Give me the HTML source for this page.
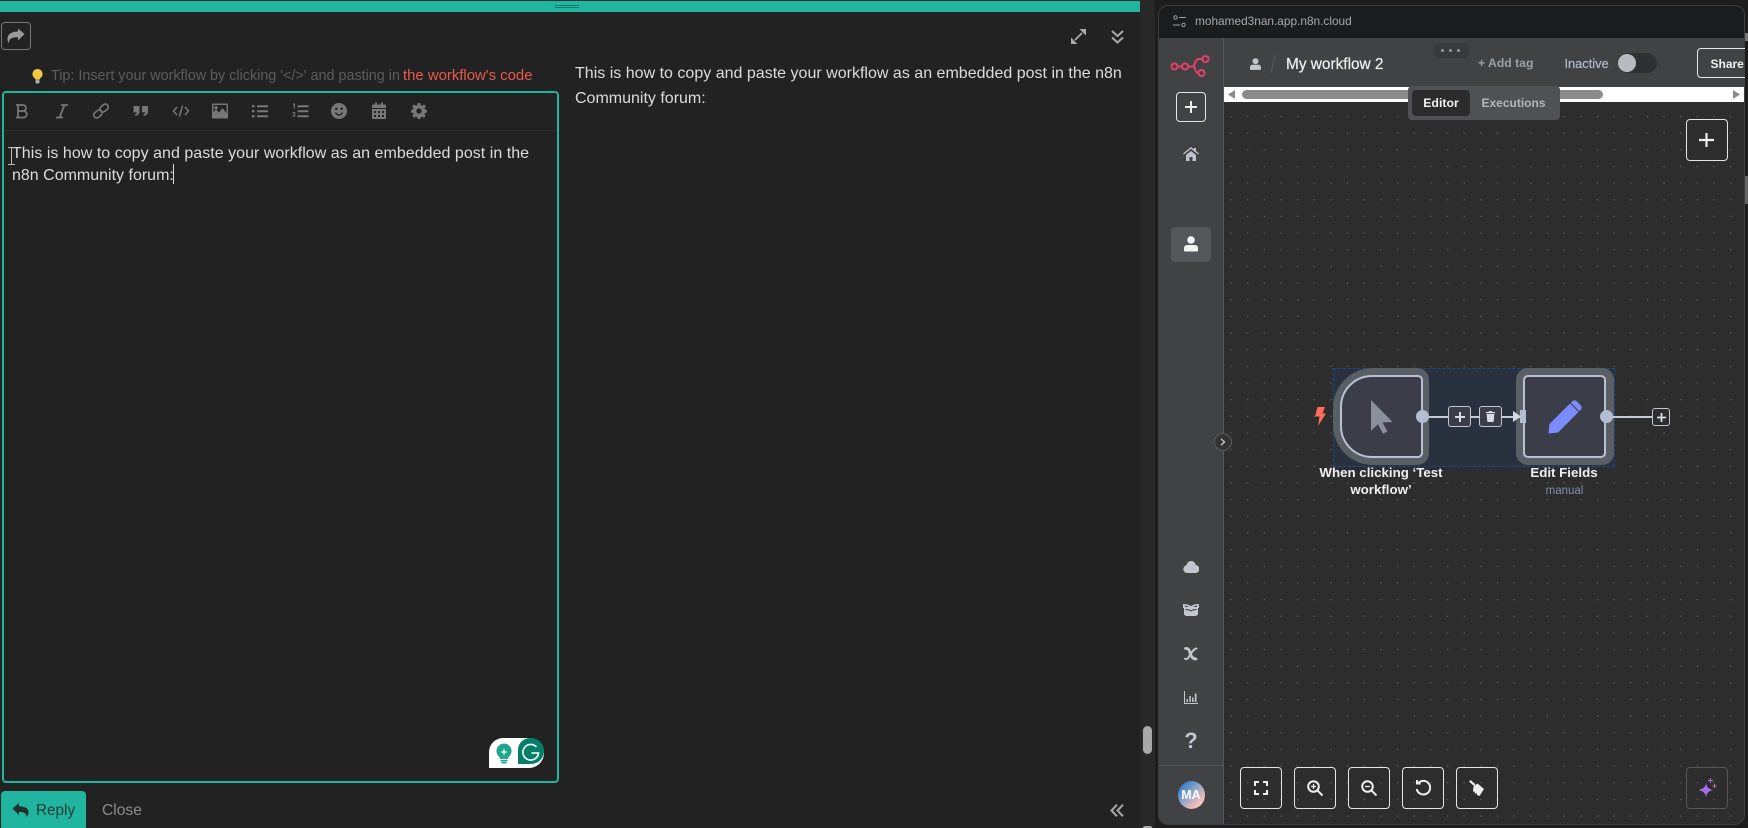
<!DOCTYPE html>
<html><head><meta charset="utf-8">
<style>
html,body{margin:0;padding:0;background:#222;width:1748px;height:828px;overflow:hidden}
body{position:relative;font-family:"Liberation Sans",sans-serif}
.a,.t,svg{position:absolute;display:block}
.a{box-sizing:border-box}
.t{white-space:nowrap;line-height:20px}
.c{text-align:center}
.btn{box-sizing:border-box;position:absolute;border:1px solid #e4e6ea;border-radius:4px;background:#2d2d2d}
</style></head><body>
<!-- top -->
<div class="a" style="left:0;top:0;width:1140px;height:1px;background:#26302e"></div>
<div class="a" style="left:0;top:1px;width:1140px;height:11px;background:#1fb59f"></div>
<div class="a" style="left:555px;top:5px;width:24px;height:1px;background:#13796a"></div>
<div class="a" style="left:555px;top:7px;width:24px;height:1px;background:#13796a"></div>

<div class="a" style="left:1px;top:22px;width:30px;height:28px;border:1px solid #777;border-radius:4px"></div>
<svg style="left:7px;top:28px" width="18" height="16" viewBox="0 0 18 16"><path fill="#9a9a9a" d="M17.500 6L11 .5v3C5 3.600 .5 5.500.5 11.500c0 1.500.7 2.800 1.700 3.800-.6-3.800 1.500-6 8.800-6v3.200z"/></svg>

<svg style="left:1071px;top:29px" width="15" height="15" viewBox="0 0 15 15"><path fill="#aaa" d="M8.500 0H15v6.500zM0 8.500V15h6.500z"/><path stroke="#aaa" stroke-width="1.800" d="M11 4L4 11"/></svg>
<svg style="left:1111px;top:30px" width="13" height="14" viewBox="0 0 13 14"><path fill="none" stroke="#aaa" stroke-width="2" d="M1 1l5.500 5L12 1M1 7.500l5.500 5 5.500-5"/></svg>

<svg style="left:31px;top:69px" width="13" height="15" viewBox="0 0 13 15"><path fill="#f5c842" d="M6.500 0a5 5 0 0 1 3 9c-.6.500-.8 1-.9 1.800H4.400c-.1-.8-.3-1.300-.9-1.800a5 5 0 0 1 3-9z"/><rect x="4.500" y="11" width="4" height="3.500" rx="1" fill="#9fb2c4"/></svg>
<div class="t" style="left:51px;top:66px;font-size:14.360px;color:#5c5c5c">Tip: Insert your workflow by clicking '&lt;/&gt;' and pasting in</div>
<div class="t" style="left:403px;top:66px;font-size:14.900px;color:#ea5a4c">the workflow's code</div>

<div class="t" style="left:575px;top:63.500px;font-size:16px;color:#dcdcdc;letter-spacing:.01px">This is how to copy and paste your workflow as an embedded post in the n8n</div>
<div class="t" style="left:575px;top:88.500px;font-size:16px;color:#dcdcdc">Community forum:</div>

<!-- editor -->
<div class="a" style="left:1.500px;top:91px;width:557.500px;height:692px;border:2px solid #1fb59f;border-radius:4px"></div>
<div class="a" style="left:4px;top:130px;width:553px;height:1px;background:#2e2e2e"></div>

<svg style="left:13px;top:102px" width="18" height="18" viewBox="0 0 18 18"><path fill="none" stroke="#777" stroke-width="1.800" d="M5 3h5a3 3 0 0 1 0 6H5zM5 9h6a3.300 3.300 0 0 1 0 6.500H5zM3 3h3M3 15.500h3"/></svg>
<svg style="left:53px;top:102px" width="18" height="18" viewBox="0 0 18 18"><path fill="none" stroke="#777" stroke-width="1.800" d="M8 3h7M3 15.500h7M11.500 3L6.500 15.500"/></svg>
<svg style="left:92px;top:102px" width="18" height="18" viewBox="0 0 18 18"><g fill="none" stroke="#777" stroke-width="1.600"><rect x="-6" y="-3" width="9" height="6" rx="3" transform="translate(7 11) rotate(-40)"/><rect x="-3" y="-3" width="9" height="6" rx="3" transform="translate(11 7) rotate(-40)"/></g></svg>
<svg style="left:132px;top:102px" width="18" height="18" viewBox="0 0 18 18"><path fill="#777" d="M1.500 4h6v5.500c0 2.500-1.500 4-4 4.500l-.7-1.600c1.300-.3 2-1 2-2H1.500zM10 4h6v5.500c0 2.500-1.500 4-4 4.500l-.7-1.600c1.300-.3 2-1 2-2H10z"/></svg>
<svg style="left:172px;top:102px" width="18" height="18" viewBox="0 0 18 18"><path fill="none" stroke="#777" stroke-width="1.500" d="M5 5L1.500 9 5 13M13 5l3.500 4L13 13M10.500 3.500l-3 11"/></svg>
<svg style="left:212px;top:102px" width="16" height="18" viewBox="0 0 16 18"><path fill="#777" fill-rule="evenodd" d="M1 1.500h14a1 1 0 0 1 1 1v13a1 1 0 0 1-1 1H1a1 1 0 0 1-1-1v-13a1 1 0 0 1 1-1zM1.500 3v7l2.500-2.500 3 3 3.500-4.500 4 5V3zM4 4a1.700 1.700 0 1 1 0 3.400A1.700 1.700 0 0 1 4 4z"/></svg>
<svg style="left:252px;top:102px" width="17" height="18" viewBox="0 0 17 18"><path fill="#777" d="M0 3h2.400v2.400H0zM0 8h2.400v2.400H0zM0 13h2.400v2.400H0zM5 3.300h11v2H5zM5 8.300h11v2H5zM5 13.300h11v2H5z"/></svg>
<svg style="left:292px;top:102px" width="17" height="18" viewBox="0 0 17 18"><path fill="#777" d="M5.500 3.300h11v2h-11zM5.500 8.300h11v2h-11zM5.500 13.300h11v2h-11zM1 1.500h2v5H1.800V3H1zM.5 10.500c1-1 3-.6 3 .8 0 1-1 1.400-1.500 2.200h1.600v1H.5v-.8c.7-1 1.800-1.600 1.800-2.300 0-.5-.9-.5-1.500 0z"/></svg>
<svg style="left:331px;top:103px" width="16" height="16" viewBox="0 0 16 16"><path fill="#777" fill-rule="evenodd" d="M8 0a8 8 0 1 1 0 16A8 8 0 0 1 8 0zM5.300 4.500a1.200 1.200 0 1 0 0 2.500 1.200 1.200 0 0 0 0-2.500zm5.400 0a1.200 1.200 0 1 0 0 2.500 1.200 1.200 0 0 0 0-2.500zM4 9.500c.7 2 2.300 3 4 3s3.300-1 4-3l-1-.4c-.6 1.400-1.800 2.200-3 2.200s-2.400-.8-3-2.200z"/></svg>
<svg style="left:372px;top:102px" width="14" height="18" viewBox="0 0 14 18"><path fill="#777" fill-rule="evenodd" d="M3 .5h2v2h4v-2h2v2h2a1 1 0 0 1 1 1V6H0V3.500a1 1 0 0 1 1-1h2zM0 7h14v9a1 1 0 0 1-1 1H1a1 1 0 0 1-1-1zm2 2v2h2V9zm4 0v2h2V9zm4 0v2h2V9zm-8 4v2h2v-2zm4 0v2h2v-2zm4 0v2h2v-2z"/></svg>
<svg style="left:411px;top:103px" width="16" height="16" viewBox="0 0 16 16"><path fill="#777" fill-rule="evenodd" d="M6.700 0h2.600l.4 2.200 1.300.6L13 1.500 14.800 3.300 13.500 5.200l.6 1.300 1.900.4v2.600l-2 .4-.5 1.300 1.200 1.800-1.800 1.800-1.800-1.200-1.400.5-.4 2H6.700l-.4-2-1.400-.5-1.800 1.200L1.300 13l1.200-1.800-.5-1.300-2-.4V6.900l2-.4.5-1.300L1.200 3.300 3 1.500l1.900 1.300 1.400-.6zM8 5.300a2.700 2.700 0 1 0 0 5.400 2.700 2.700 0 0 0 0-5.400z"/></svg>

<div class="t" style="left:12px;top:143.500px;font-size:16px;color:#dcdcdc;letter-spacing:.03px">This is how to copy and paste your workflow as an embedded post in the</div>
<div class="t" style="left:12px;top:165.500px;font-size:16px;color:#dcdcdc">n8n Community forum:</div>
<div class="a" style="left:173px;top:164px;width:1px;height:20px;background:#ddd"></div>
<svg style="left:8px;top:147px" width="7" height="18" viewBox="0 0 7 18"><path fill="none" stroke="#bbb" d="M0 .5h7M3.500.5v17M0 17.500h7"/></svg>

<!-- grammarly -->
<div class="a" style="left:489px;top:738px;width:55px;height:30px;background:#fff;border-radius:14px 15px 15px 0"></div>
<svg style="left:495px;top:743px" width="18" height="21" viewBox="0 0 18 21"><path fill="#1fa58f" d="M9 .5a7.500 7.500 0 0 1 4.500 13.500l-.5 2H5l-.5-2A7.500 7.500 0 0 1 9 .5z"/><rect x="5.500" y="17" width="7" height="1.500" fill="#1fa58f"/><rect x="6.500" y="19" width="5" height="1.500" fill="#1fa58f"/><path fill="#cdf3ea" d="M9 5l1 3 3 1-3 1-1 3-1-3-3-1 3-1z"/></svg>
<div class="a" style="left:518px;top:738px;width:26px;height:26px;background:#04806a;border-radius:12px 13px 13px 0"></div>
<svg style="left:520px;top:742px" width="21" height="21" viewBox="0 0 21 21"><path fill="none" stroke="#fff" stroke-width="1.600" d="M16.500 5a7.800 7.800 0 1 0 2 6h-7"/></svg>

<!-- reply -->
<div class="a" style="left:1px;top:791px;width:85px;height:40px;background:#1fb59f;border-radius:4px"></div>
<svg style="left:12px;top:803px" width="17" height="15" viewBox="0 0 17 15"><path fill="#1f302d" d="M.5 5.500L7 0v3.200c5 .1 9.500 1.300 9.500 6.300 0 2-1.200 3.700-2.500 4.700.8-3.300-1-5.200-7-5.300V12z"/></svg>
<div class="t" style="left:36px;top:801px;font-size:15.300px;color:#1d3a35">Reply</div>
<div class="t" style="left:102px;top:801px;font-size:15.600px;color:#8c8c8c">Close</div>
<svg style="left:1110px;top:804px" width="14" height="13" viewBox="0 0 14 13"><path fill="none" stroke="#a8a8a8" stroke-width="2" d="M7 .7L1.500 6.500 7 12.300M13 .7L7.500 6.500l5.500 5.800"/></svg>

<!-- strip -->
<div class="a" style="left:1140px;top:0;width:15px;height:828px;background:#282828"></div>
<div class="a" style="left:1143px;top:726px;width:9px;height:28px;background:#a8a8a8;border-radius:4.500px"></div>
<div class="a" style="left:1143px;top:826px;width:9px;height:4px;background:#a8a8a8;border-radius:2px"></div>
<div class="a" style="left:1155px;top:0;width:593px;height:828px;background:#1d1d1e"></div>

<!-- n8n panel -->
<div class="a" style="left:1158px;top:5px;width:587px;height:820px;background:#2d2d2d;border:1px solid #3c3d3f;border-radius:10px;overflow:hidden">
  <div class="a" style="left:-1px;top:-1px;width:587px;height:33px;background:#1b1c1e"></div>
</div>
<!-- canvas dots -->
<div class="a" style="left:1224px;top:102px;width:520px;height:722px;background-image:radial-gradient(circle at 1px 1px,#5f5f5f .6px,transparent .9px);background-size:16.667px 16.667px;background-position:6px 13.500px"></div>

<svg style="left:1173px;top:15px" width="13" height="13" viewBox="0 0 13 13"><g fill="none" stroke="#9a9ea5"><circle cx="2.500" cy="2.500" r="1.700"/><path d="M6 2.500h7M0 10h7"/><circle cx="10.500" cy="10" r="1.700"/></g></svg>
<div class="t" style="left:1195px;top:10.500px;font-size:11.850px;color:#a4a9b0">mohamed3nan.app.n8n.cloud</div>

<!-- sidebar -->
<div class="a" style="left:1159px;top:38px;width:65px;height:786px;background:#414244;border-right:1px solid #55565a;border-radius:0 0 0 9px"></div>
<div class="a" style="left:1159px;top:765px;width:64px;height:1px;background:#55565a"></div>
<!-- header -->
<div class="a" style="left:1224px;top:38px;width:520px;height:49px;background:#414244"></div>
<!-- white scroll -->
<div class="a" style="left:1224px;top:87px;width:520px;height:15px;background:#fff"></div>
<div class="a" style="left:1242px;top:90px;width:361px;height:9px;background:#8b8b8b;border-radius:4.500px"></div>
<svg style="left:1228px;top:90px" width="8" height="9" viewBox="0 0 8 9"><path fill="#8b8b8b" d="M7 0v9L0 4.500z"/></svg>
<svg style="left:1733px;top:90px" width="8" height="9" viewBox="0 0 8 9"><path fill="#8b8b8b" d="M0 0v9l7-4.500z"/></svg>

<!-- logo -->
<svg style="left:1170px;top:55px" width="40" height="22" viewBox="0 0 40 22"><g fill="none" stroke="#e8406a" stroke-width="2"><circle cx="4.500" cy="11.500" r="3"/><circle cx="15" cy="11.500" r="3"/><circle cx="35.500" cy="4" r="3"/><circle cx="31.500" cy="18" r="3"/><path d="M7.500 11.500H12M18 11.500h4c2 0 2.500-1.500 3-3.500s1.500-4 4-4h3.500M22 11.500c2.500 0 2.800 1.500 3.200 3.200.4 1.800 1.300 3.300 3.300 3.300"/></g></svg>
<div class="a" style="left:1176px;top:92px;width:30px;height:30px;border:1px solid #e4e6ea;border-radius:4px"></div>
<svg style="left:1184px;top:100px" width="14" height="14" viewBox="0 0 14 14"><path fill="#eee" d="M6 1h2v5h5v2H8v5H6V8H1V6h5z"/></svg>
<svg style="left:1183px;top:147px" width="16" height="14" viewBox="0 0 16 14"><path fill="#bfc3cc" d="M8 0l3 2.400V1h2v3l3 2.500-.8 1L8 1.800.8 7.500 0 6.500zM3 8l5-4 5 4v6H9.500v-4h-3v4H3z"/></svg>
<div class="a" style="left:1171px;top:227px;width:40px;height:35px;background:#55565a;border-radius:4px"></div>
<svg style="left:1184px;top:236px" width="14" height="16" viewBox="0 0 14 16"><circle cx="7" cy="4" r="3.800" fill="#f2f2f2"/><path fill="#f2f2f2" d="M3 9h8a3 3 0 0 1 3 3v2.500a1 1 0 0 1-1 1H1a1 1 0 0 1-1-1V12a3 3 0 0 1 3-3z"/></svg>
<svg style="left:1183px;top:561px" width="16" height="12" viewBox="0 0 16 12"><path fill="#c2c6ce" d="M4 12a4 4 0 0 1-.5-7.900C4 1.700 6 0 8 0c2.500 0 4.300 1.700 4.700 4A4 4 0 0 1 12 12z"/></svg>
<svg style="left:1183px;top:603px" width="16" height="13" viewBox="0 0 16 13"><path fill="#c2c6ce" fill-rule="evenodd" d="M0 1l4 .2L8 3l4-1.800L16 1v4h-1v6.500l-2 1.500H3l-2-1.500V5H0zM2 2.500V4h4.300zm12 0L9.700 4H14zM2.500 6v1c2 0 3.500.4 5.500 1.500 2-1.100 3.500-1.500 5.500-1.500V6c-2 0-4 .4-5.500 1.300C6.500 6.400 4.500 6 2.500 6z"/></svg>
<svg style="left:1183px;top:646px" width="16" height="16" viewBox="0 0 16 16"><path fill="none" stroke="#c2c6ce" stroke-width="2.800" stroke-linecap="round" d="M2.500 2.500c2.500-.4 3.500.6 4.300 3.600S9 13 13 13"/><path fill="none" stroke="#c2c6ce" stroke-width="2" stroke-linecap="round" d="M13.500 2.500c-3 .2-6 5.500-8 9-.8 1.300-2.200 2-3.500 1.300"/></svg>
<svg style="left:1184px;top:691px" width="14" height="13" viewBox="0 0 14 13"><path fill="#c2c6ce" d="M0 0h1v12h13v1H0zM2.500 8h1.500v3H2.500zM5.300 5h1.500v6H5.300zM8 6.500h1.500V11H8zM10.800 2.500h1.700V11h-1.700z"/></svg>
<div class="t c" style="left:1179px;top:730.500px;width:24px;font-size:22px;font-weight:bold;color:#c2c6ce">?</div>
<div class="a" style="left:1177.500px;top:781px;width:27px;height:28px;border-radius:50%;background:linear-gradient(135deg,#2f77c9 10%,#8aa6cc 45%,#f0b8b8 75%,#e8e8e8)"></div>
<div class="t c" style="left:1177.500px;top:785px;width:27px;font-size:12.500px;font-weight:bold;color:#fff">MA</div>

<!-- header items -->
<svg style="left:1250px;top:58px" width="11" height="12" viewBox="0 0 14 15"><circle cx="7" cy="4" r="3.800" fill="#c2c6ce"/><path fill="#c2c6ce" d="M3 8.500h8a3 3 0 0 1 3 3V14a1 1 0 0 1-1 1H1a1 1 0 0 1-1-1v-2.500a3 3 0 0 1 3-3z"/></svg>
<svg style="left:1270px;top:55px" width="6" height="18" viewBox="0 0 6 18"><path stroke="#5a5b5f" d="M5 .5L1 17.500"/></svg>
<div class="t" style="left:1286px;top:55px;font-size:15.400px;color:#f0f0f0;-webkit-text-stroke:.2px #f0f0f0">My workflow 2</div>
<div class="a" style="left:1433px;top:43px;width:37px;height:15px;background:#393a3c;border-radius:7px"></div>
<div class="a" style="left:1441px;top:49px;width:3px;height:3px;border-radius:50%;background:#999"></div>
<div class="a" style="left:1449px;top:49px;width:3px;height:3px;border-radius:50%;background:#999"></div>
<div class="a" style="left:1457px;top:49px;width:3px;height:3px;border-radius:50%;background:#999"></div>
<div class="t" style="left:1478px;top:53px;font-size:12.200px;font-weight:bold;color:#9aa0a8">+ Add tag</div>
<div class="t" style="left:1564.500px;top:54px;font-size:12.800px;color:#b2bccb;-webkit-text-stroke:.2px #b2bccb">Inactive</div>
<div class="a" style="left:1618px;top:53px;width:39px;height:20px;background:#2f3033;border-radius:10px"></div>
<div class="a" style="left:1618px;top:54px;width:18px;height:18px;background:#b8bbc2;border-radius:50%"></div>
<div class="a" style="left:1697px;top:48px;width:48px;height:30px;border:1px solid #e4e6ea;border-right:0;border-radius:4px 0 0 4px"></div>
<div class="t" style="left:1710.500px;top:53.500px;font-size:12px;font-weight:bold;color:#f0f0f0">Share</div>

<!-- tabs -->
<div class="a" style="left:1408px;top:86px;width:152px;height:34px;background:#505154;border-radius:4px"></div>
<div class="a" style="left:1412px;top:90px;width:58px;height:26px;background:#2b2b2c;border-radius:4px"></div>
<div class="t c" style="left:1412px;top:93px;width:58px;font-size:12.300px;font-weight:bold;color:#f0f0f0">Editor</div>
<div class="t" style="left:1481.500px;top:93px;font-size:12px;font-weight:bold;color:#b4b6ba">Executions</div>

<!-- right plus -->
<div class="btn" style="left:1686px;top:119px;width:42px;height:42px"></div>
<svg style="left:1699px;top:133px" width="15" height="14" viewBox="0 0 15 14"><path fill="#eee" d="M6.400 0h2.200v5.900H15v2.200H8.600V14H6.400V8.100H0V5.900h6.400z"/></svg>

<!-- nodes -->
<div class="a" style="left:1333px;top:368px;width:282px;height:99px;background:#2a313e;border:1px dashed #20488e"></div>
<div class="a" style="left:1333px;top:368px;width:96px;height:97px;background:#5a5f66;border-radius:40px 12px 12px 40px"></div>
<div class="a" style="left:1340px;top:375px;width:83px;height:83px;background:#3b3e49;border:2px solid #b9c0d1;border-radius:32px 5px 5px 32px"></div>
<svg style="left:1371px;top:400px" width="22" height="34" viewBox="0 0 22 34"><path fill="#8a909c" d="M0 0l21.500 22-10 .5 5 9-4.500 2.200-5-9.500-7 6.500z"/></svg>
<div class="a" style="left:1516px;top:368px;width:98px;height:97px;background:#5a5f66;border-radius:12px"></div>
<div class="a" style="left:1523px;top:375px;width:83px;height:83px;background:#3b3e49;border:2px solid #b9c0d1;border-radius:5px"></div>
<svg style="left:1548px;top:400px" width="34" height="34" viewBox="0 0 34 34"><path fill="#7a8cff" d="M22 3.500l8.500 8.500L10 32.500.5 33.500 1.500 24zM24 1.500c1.500-1.500 3.500-1.500 5 0l3.500 3.500c1.500 1.500 1.500 3.500 0 5l-1.200 1.200-8.500-8.500z"/></svg>

<div class="a" style="left:1429px;top:415.500px;width:91px;height:2px;background:#c6cad2"></div>
<div class="a" style="left:1612px;top:415.500px;width:40px;height:2px;background:#c6cad2"></div>
<div class="a" style="left:1416px;top:410px;width:13.400px;height:13.400px;border-radius:50%;background:#b4bdd0"></div>
<div class="a" style="left:1599.500px;top:410px;width:13.400px;height:13.400px;border-radius:50%;background:#b4bdd0"></div>
<div class="a" style="left:1520px;top:410px;width:6px;height:13px;background:#b4bdd0"></div>
<svg style="left:1513px;top:411px" width="8" height="11" viewBox="0 0 8 11"><path fill="#d4d8e0" d="M0 0l8 5.500L0 11z"/></svg>

<div class="a" style="left:1448px;top:406px;width:23px;height:21px;background:#3b3e49;border:1.500px solid #c0c6d2;border-radius:3px"></div>
<svg style="left:1454.500px;top:411.500px" width="10" height="10" viewBox="0 0 10 10"><path fill="#d8dce4" d="M4 0h2v4h4v2H6v4H4V6H0V4h4z"/></svg>
<div class="a" style="left:1478.500px;top:406px;width:23px;height:21px;background:#3b3e49;border:1.500px solid #c0c6d2;border-radius:3px"></div>
<svg style="left:1485.500px;top:411px" width="9" height="11" viewBox="0 0 9 11"><path fill="#d8dce4" d="M0 1h2.500l.5-1h3l.5 1H9v1.200H0zM.7 3h7.600l-.5 7a1 1 0 0 1-1 1H2.200a1 1 0 0 1-1-1z"/></svg>
<div class="a" style="left:1652px;top:408px;width:18px;height:18px;background:#2d2d2d;border:1.500px solid #c0c6d2;border-radius:3px"></div>
<svg style="left:1656.500px;top:412.500px" width="9" height="9" viewBox="0 0 10 10"><path fill="#d8dce4" d="M4 0h2v4h4v2H6v4H4V6H0V4h4z"/></svg>
<svg style="left:1315px;top:407px" width="11" height="19" viewBox="0 0 11 19"><path fill="#ff6d5a" d="M2.500 0H10L7.500 6.500H11L3 19l1.500-9.500H0z"/></svg>

<div class="t c" style="left:1300px;top:463px;width:162px;font-size:13.300px;font-weight:bold;color:#f0f0f2">When clicking ‘Test</div>
<div class="t c" style="left:1300px;top:479.500px;width:162px;font-size:13.300px;font-weight:bold;color:#f0f0f2">workflow’</div>
<div class="t c" style="left:1514px;top:463px;width:100px;font-size:13.300px;font-weight:bold;color:#f0f0f2">Edit Fields</div>
<div class="t c" style="left:1514.500px;top:481px;width:100px;font-size:11.500px;color:#8290a4">manual</div>

<!-- expander -->
<div class="a" style="left:1214px;top:433px;width:18px;height:18px;border-radius:50%;background:#333;border:1px solid #5a5b5f"></div>
<svg style="left:1220px;top:438px" width="6" height="8" viewBox="0 0 6 8"><path fill="none" stroke="#ccc" stroke-width="1.300" d="M1 .8L4.500 4 1 7.200"/></svg>

<!-- bottom buttons -->
<div class="btn" style="left:1240px;top:767px;width:42px;height:41.500px;background:none"></div>
<svg style="left:1254px;top:781px" width="14" height="14" viewBox="0 0 14 14"><path fill="none" stroke="#eee" stroke-width="2" d="M1 5V1h4M9 1h4v4M13 9v4H9M5 13H1V9"/></svg>
<div class="btn" style="left:1294px;top:767px;width:42px;height:41.500px;background:none"></div>
<svg style="left:1307px;top:780px" width="16" height="16" viewBox="0 0 16 16"><g fill="none" stroke="#eee" stroke-width="2"><circle cx="6.500" cy="6.500" r="5.300"/><path d="M10.500 10.500l5 5"/></g><path fill="none" stroke="#eee" stroke-width="1.300" d="M4 6.500h5M6.500 4v5"/></svg>
<div class="btn" style="left:1348px;top:767px;width:42px;height:41.500px;background:none"></div>
<svg style="left:1361px;top:780px" width="16" height="16" viewBox="0 0 16 16"><g fill="none" stroke="#eee" stroke-width="2"><circle cx="6.500" cy="6.500" r="5.300"/><path d="M10.500 10.500l5 5"/></g><path fill="none" stroke="#eee" stroke-width="1.300" d="M4 6.500h5"/></svg>
<div class="btn" style="left:1402px;top:767px;width:42px;height:41.500px;background:none"></div>
<svg style="left:1415px;top:779px" width="16" height="17" viewBox="0 0 16 17"><path fill="none" stroke="#eee" stroke-width="2" d="M3 4.500a6.800 6.800 0 1 1-1.300 5.500M5.500 4.500H2V1"/></svg>
<div class="btn" style="left:1456px;top:767px;width:42px;height:41.500px;background:none"></div>
<svg style="left:1469px;top:780px" width="16" height="17" viewBox="0 0 16 17"><path fill="none" stroke="#eee" stroke-width="2.200" d="M.8.800l5 4.400"/><path fill="#eee" d="M4.500 6.500L8.500 3.500l6.500 5.500-4.500 7-2.500-1-.5-2-1.500.8-.5-2.300-1.500.2z"/></svg>
<div class="btn" style="left:1686px;top:767px;width:42px;height:41.500px;border-color:#5a5558;background:none"></div>
<svg style="left:1698px;top:778px" width="19" height="20" viewBox="0 0 19 20"><path fill="#a66ff0" d="M8 5c.6 4 2.500 6 7 7-4.500 1-6.400 3-7 7.500C7.400 15 5.500 13 0 12c5.500-1 7.400-3 8-7z"/><path fill="none" stroke="#a66ff0" d="M12.500 0v5M10 2.500h5"/><path fill="none" stroke="#c86aa8" d="M16.500 6v4M14.500 8h4"/></svg>

<!-- right edge -->
<div class="a" style="left:1745px;top:33px;width:3px;height:8px;background:#777"></div>
<div class="a" style="left:1745px;top:176px;width:3px;height:28px;background:#666"></div>
</body></html>
